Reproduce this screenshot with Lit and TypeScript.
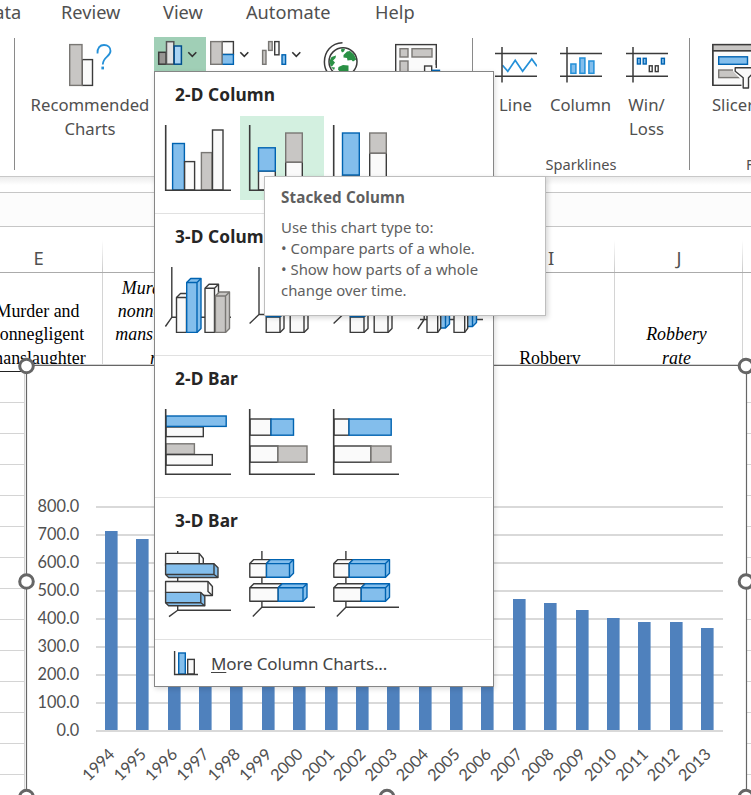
import { LitElement, html, svg, css } from "lit";
import { customElement, property } from "lit/decorators.js";

const INK = "#3b3b3b", BLUE = "#0063b1", SKY = "#83beec", GREY = "#797774", SILVER = "#c8c6c4", PAPER = "#fafafa";

type Tone = "w" | "b" | "g";
const FILL: Record<Tone, string> = { w: PAPER, b: SKY, g: SILVER };
const EDGE: Record<Tone, string> = { w: INK, b: BLUE, g: GREY };

const box = (t: Tone, x1: number, y1: number, x2: number, y2: number) =>
  svg`<rect x=${x1} y=${y1} width=${x2 - x1} height=${y2 - y1} fill=${FILL[t]} stroke=${EDGE[t]} stroke-width="1.4"/>`;
const line = (d: string, c = INK, w = 1.4) => svg`<path d=${d} fill="none" stroke=${c} stroke-width=${w}/>`;
const shape = (t: Tone, d: string, edge = EDGE[t]) => svg`<path d=${d} fill=${FILL[t]} stroke=${edge} stroke-width="1.4" stroke-linejoin="round"/>`;
/* Cuboid seen from the upper right: front face plus top and side faces. */
const cube = (t: Tone, x1: number, y1: number, x2: number, y2: number, dx = 4, dy = 4) => svg`
  ${shape(t, `M${x1} ${y1}L${x1 + dx} ${y1 - dy}H${x2 + dx}V${y2 - dy}L${x2} ${y2}H${x1}Z`)}
  ${line(`M${x1} ${y1}H${x2}V${y2}M${x2} ${y1}L${x2 + dx} ${y1 - dy}`, EDGE[t])}`;
/* Cuboid seen from the lower right. */
const under = (t: Tone, x1: number, y1: number, x2: number, y2: number) => svg`
  ${shape(t, `M${x1} ${y1}H${x2}L${x2 + 4} ${y1 + 4}V${y2 + 3}H${x1 + 3}L${x1} ${y2}Z`, INK)}
  ${line(`M${x1} ${y2}H${x2}V${y1}M${x2} ${y2}L${x2 + 4} ${y2 + 3}`)}`;

const axes = line("M9.7 9V74.2H75", INK, 1.6);

const TILES: Record<string, unknown[]> = {
  "2-D Column": [
    svg`${box("b", 16.6, 27.5, 28.4, 74)}${box("w", 28.6, 45.6, 38.6, 74)}${box("g", 45.4, 36.6, 56, 74)}${box("w", 56.5, 14, 67, 74)}${axes}`,
    svg`${box("w", 18.5, 55, 35.3, 74)}${box("b", 18.5, 31.8, 35.3, 55)}${box("w", 45.7, 46, 62.3, 74)}${box("g", 45.7, 17, 62.3, 46)}${axes}`,
    svg`${box("w", 18.5, 60, 35.3, 74)}${box("b", 18.5, 17, 35.3, 59)}${box("w", 45.7, 37, 62.3, 74)}${box("g", 45.7, 17, 62.3, 37)}${axes}`,
  ],
  "3-D Column": [
    svg`${line("M15.8 9V59.3L9.4 68.5M15.8 59.3H75")}${cube("w", 20.5, 39.5, 30.5, 74.4)}${cube("b", 30.7, 24.5, 41, 74.4)}${cube("w", 49, 30.3, 58.5, 74.4)}${cube("g", 59.4, 38, 69.5, 74.4)}`,
    svg`${line("M19 9V56.5L9.6 65.5M19 56.5H60")}${cube("w", 26.2, 59, 40, 74.4)}${cube("b", 26.2, 34, 40, 58.6)}${cube("w", 50.2, 46, 64, 74.4)}`,
    svg`${line("M19 9V56.5L9.6 65.5M19 56.5H60")}${cube("w", 26.2, 59, 40, 74.4)}${cube("b", 26.2, 20, 40, 58.6)}${cube("w", 50.2, 40, 64, 74.4)}`,
    svg`${line("M16.2 9V61.5L9.8 71M12 61.5H75")}${cube("b", 31, 34, 37.5, 70)}${cube("b", 58, 30, 64.5, 68.5)}${cube("w", 19, 42, 29.7, 74.4, 3)}${cube("w", 46, 44, 56.7, 74.4, 3)}`,
  ],
  "2-D Bar": [
    svg`${box("w", 10, 27, 47.3, 36.6)}${box("b", 10, 16, 70.2, 26.4)}${box("g", 10, 43.8, 38.4, 54.2)}${box("w", 10, 54.6, 56.3, 65.2)}${axes}`,
    svg`${box("w", 10, 19, 31, 35.2)}${box("b", 31, 19, 53.5, 35.2)}${box("w", 10, 46, 38, 62.2)}${box("g", 38, 46, 67, 62.2)}${axes}`,
    svg`${box("w", 10, 19, 25, 35.2)}${box("b", 25, 19, 67.2, 35.2)}${box("w", 10, 46, 47, 62.2)}${box("g", 47, 46, 67, 62.2)}${axes}`,
  ],
  "3-D Bar": [
    svg`${line("M21.7 9V68.2L13 74.6M21.7 68.2H75")}${shape("w", "M9.6 11.4H43.2L47.3 16.5V24H9.6Z")}${line("M43.2 11.4V24")}${under("b", 9.6, 21.7, 58, 32.5)}
      ${shape("w", "M9.6 39.5H52L56.4 44.5V53.5H50L9.6 51Z")}${line("M52 39.5V49.5L56.4 53.5")}${under("b", 9.6, 50.4, 44.8, 60.8)}`,
    svg`${line("M21.9 9V65.3L12.8 74.4M21.9 65.3H75")}${cube("w", 9.8, 21.6, 26.5, 35.2)}${cube("b", 26.5, 21.6, 49.5, 35.2)}${cube("w", 9.8, 45.7, 38.2, 59.2)}${cube("b", 38.2, 45.7, 63, 59.2)}`,
    svg`${line("M21.9 9V65.3L12.8 74.4M21.9 65.3H75")}${cube("w", 9.8, 21.6, 25.2, 35.2)}${cube("b", 25.2, 21.6, 61.5, 35.2)}${cube("w", 9.8, 45.7, 37.2, 59.2)}${cube("b", 37.2, 45.7, 61.5, 59.2)}`,
  ],
};

@customElement("chart-menu")
export class ChartMenu extends LitElement {
  static styles = css`
    :host { display: flex; flex-direction: column; box-sizing: border-box; background: #fff; border: 1px solid #868686; box-shadow: 1px 2px 5px rgba(0,0,0,.14); font-family: "Noto Sans", sans-serif; }
    section { height: 141px; border-bottom: 1px solid #e1e1e1; margin: 0 1px 0 0; }
    h3 { margin: 0; height: 44px; padding-left: 20px; font-size: 17.3px; font-weight: 700; line-height: 46px; letter-spacing: .12px; color: #262626; box-sizing: border-box; white-space: nowrap; }
    .tiles { display: flex; padding-left: 1px; }
    .tile { width: 84px; height: 84px; }
    .tile.on { background: #d3f0e0; }
    svg { display: block; }
    .more { display: flex; align-items: center; height: 46px; padding-left: 17px; color: #444; }
    .more span { margin-left: 11px; font-size: 17px; white-space: nowrap; letter-spacing: -.13px; }
    u { text-underline-offset: 2px; text-decoration-thickness: 1px; }
  `;
  render() {
    return html`
      ${Object.entries(TILES).map(([name, tiles]) => html`<section>
        <h3>${name}</h3>
        <div class="tiles">${tiles.map((t, i) => html`<div class="tile ${name === "2-D Column" && i === 1 ? "on" : ""}">
          <svg width="84" height="84" viewBox="0 0 84 84">${t}</svg></div>`)}</div>
      </section>`)}
      <div class="more">
        <svg width="28" height="28" viewBox="172 648 28 28">${box("b", 178.7, 652, 185.3, 673)}${box("w", 187.7, 658.4, 194.3, 673)}${line("M174.6 650V673.5H198")}</svg>
        <span><u>M</u>ore Column Charts...</span>
      </div>`;
  }
}

@customElement("chart-tip")
export class ChartTip extends LitElement {
  static styles = css`
    :host { display: block; box-sizing: border-box; background: #fff; border: 1px solid #bebebe; box-shadow: 2px 2px 5px rgba(0,0,0,.16); padding: 10px 16px; font: 14.9px/21px "Noto Sans", sans-serif; color: #5f5f5f; white-space: nowrap; }
    b { display: block; margin-bottom: 9px; font-size: 15.2px; letter-spacing: .12px; }
    p { margin: 0; }
  `;
  render() {
    return html`<b>Stacked Column</b><p>Use this chart type to:</p><p>• Compare parts of a whole.</p><p>• Show how parts of a whole</p><p>change over time.</p>`;
  }
}

const VALUES = [713.6, 684.5, 636.6, 611, 567.6, 523, 506.5, 504.5, 494.4, 475.8, 463.2, 469, 479.3, 469.5, 456, 430, 403, 387.1, 387.8, 367];

@customElement("crime-chart")
export class CrimeChart extends LitElement {
  static styles = css`
    :host { display: block; }
    svg { display: block; overflow: visible; }
    text { font-family: Lato, sans-serif; font-size: 16.3px; fill: #505050; text-anchor: end; }
  `;
  render() {
    return html`<svg width="725" height="430" viewBox="26 365 725 430">
      <rect x="24" y="364" width="723" height="440" fill="#fff"/>
      <path d="M24.5 795V364.5H747" fill="none" stroke="#d4d4d4"/>
      <path d="M26.5 800V365.5H746.5V800" fill="none" stroke="#666" stroke-width="1.2"/>
      ${[...Array(9).keys()].map((k) => svg`
        <rect x="96" y=${506 + 28 * k} width="627" height="2" fill="#d9d9d9"/>
        <text x="79.2" y=${512.4 + 28 * k}>${800 - 100 * k}.0</text>`)}
      ${VALUES.map((v, i) => {
        const x = Math.round(105 + 31.37 * i), top = Math.round(730.5 - v * 0.28);
        return svg`<rect x=${x} y=${top} width="12.6" height=${730 - top} fill="#4f81bd"/>
          <text transform="translate(${115.8 + 31.37 * i} 755.3) rotate(-45)">${1994 + i}</text>`;
      })}
      ${[[26.5, 366], [746, 366], [26.5, 581.5], [746, 581.5], [26.5, 797], [387, 797], [746, 797]].map(([x, y]) =>
        svg`<circle cx=${x} cy=${y} r="6.8" fill="#fff" stroke="#666" stroke-width="3"/>`)}
    </svg>`;
  }
}

@customElement("tool-button")
export class ToolButton extends LitElement {
  @property() label = "";
  static styles = css`
    :host { display: flex; flex-direction: column; align-items: center; flex: none; padding-top: 5px; box-sizing: border-box; font: 16.7px/24px "Noto Sans", sans-serif; color: #505050; text-align: center; }
    .art { height: 51px; }
    .label { white-space: pre; }
  `;
  render() {
    return html`<div class="art"><slot></slot></div><div class="label">${this.label}</div>`;
  }
}

const chevron = (x: number) => line(`M${x} 52.3L${x + 4} 56.3L${x + 8} 52.3`, "#333", 1.6);
const frame = (x: number) => line(`M${x} 53.6H${x + 42}M${x} 76.2H${x + 42}M${x + 7} 47V82.5`, INK, 1.5);

@customElement("app-root")
export class AppRoot extends LitElement {
  static styles = css`
    :host { display: flex; flex-direction: column; position: relative; width: 751px; height: 795px; overflow: hidden; background: #fff; font-family: "Noto Sans", sans-serif; color: #505050; }
    svg { display: block; flex: none; }
    .tabs { display: flex; height: 37px; line-height: 25px; font-size: 18.2px; white-space: nowrap; flex: none; }
    .tabs span { flex: none; }
    .t0 { width: 61px; text-indent: -19px; }
    .t1 { width: 102px; } .t2 { width: 83px; } .t3 { width: 129px; }
    .ribbon { display: flex; height: 139px; border-bottom: 1px solid #c8c8c8; flex: none; }
    .rule { width: 1px; height: 132px; margin-top: 1px; background: #8a8a8a; flex: none; }
    .lead { width: 14px; flex: none; }
    .charts { width: 457px; display: flex; flex: none; }
    .rec { width: 139px; padding-left: 11px; }
    .pick { width: 52px; height: 34px; background: #a0cfb6; }
    .sparks { width: 216px; display: flex; flex-direction: column; flex: none; }
    .row { display: flex; height: 116px; }
    .line { width: 63px; margin-left: 11px; }
    .col { width: 67px; } .win { width: 65px; }
    .caption { font-size: 14.6px; line-height: 22px; text-align: center; white-space: nowrap; }
    .filters { width: 61px; overflow: hidden; flex: none; }
    .slice { width: 86px; height: 116px; }
    .filters .caption { text-align: left; padding-left: 56px; }
    .shade { height: 15px; background: linear-gradient(#ececec, #fff 8px); border-bottom: 1px solid #c6c6c6; flex: none; }
    .formula { height: 33px; background: #fcfcfc; border-bottom: 1px solid #c6c6c6; flex: none; }
    .grid { display: grid; grid-template-columns: 129px 128px 128px 128px 128px 128px 40px; width: 809px; margin-left: -26px; flex: none; }
    .cols { height: 45px; border-bottom: 1px solid #ababab; }
    .cols div { font-size: 18.4px; line-height: 62px; height: 45px; text-align: center; padding-left: 1px; border-right: 1px solid transparent; border-image: linear-gradient(#fff 30%, #c8c8c8) 1; border-width: 0 1px 0 0; box-sizing: border-box; }
    .heads { height: 98px; border-bottom: 1px solid #222; }
    .heads div { display: flex; align-items: flex-end; justify-content: center; box-sizing: border-box; padding-bottom: 1px; padding-right: 1px; border-right: 1px solid #d4d4d4; font: 17.9px/23.3px "Liberation Serif", serif; color: #000; text-align: center; white-space: pre; }
    .heads .it { font-style: italic; padding-right: 4px; }
    .rows { height: 423px; background: repeating-linear-gradient(#fff 0 30px, #d4d4d4 30px 31px); flex: none; }
    crime-chart { position: absolute; left: 26px; top: 365px; }
    chart-menu { position: absolute; left: 154px; top: 71px; width: 340px; height: 616px; }
    chart-tip { position: absolute; left: 264px; top: 176px; width: 282px; height: 140px; }
  `;
  render() {
    const heads: [string, string][] = [["Murder and\nnonnegligent\nmanslaughter", ""], ["Murder and\nnonnegligent\nmanslaughter\nrate", "it"], ["", ""], ["", ""], ["Robbery", ""], ["Robbery\nrate", "it"], ["", ""]];
    return html`
      <div class="tabs"><span class="t0">Data</span><span class="t1">Review</span><span class="t2">View</span><span class="t3">Automate</span><span>Help</span></div>
      <div class="ribbon">
        <div class="lead"></div><div class="rule"></div>
        <div class="charts">
          <tool-button class="rec" .label=${"Recommended\nCharts"}>
            <svg width="48" height="46" viewBox="66 42 48 46">${box("w", 82.3, 59.6, 92.5, 85.4)}${box("g", 69.7, 44.6, 82, 85.4)}
              ${line("M97.5 53.5C97.2 47.8 100 45 104 45S110.5 47.6 110.5 51C110.5 56.5 102.8 57 102.8 64.5", "#2490d8", 1.8)}<rect x="101.4" y="66.6" width="2.6" height="2.8" fill="#2490d8"/></svg>
          </tool-button>
          <div class="pick"><svg width="52" height="34" viewBox="154 37 52 34">
            <g stroke-width="1.5"><rect x="158.7" y="52.3" width="7.4" height="11.9" fill="#979593" stroke="#3b3b3b"/><rect x="166.5" y="41.7" width="7.3" height="22.5" fill="#e1e1e1" stroke="#555"/><rect x="174.2" y="46" width="7.2" height="18.2" fill="#a9d3f2" stroke="#004e8c"/></g>${chevron(188.3)}</svg></div>
          <svg width="266" height="39" viewBox="206 37 266 39">
            ${box("w", 222, 41.6, 233.4, 54.5)}${box("b", 222, 54.5, 233.4, 64.3)}${box("g", 210.7, 41.6, 222, 64.3)}${chevron(240.3)}
            ${box("g", 262.6, 50.4, 266, 64.3)}${box("g", 268.6, 41.6, 272.2, 50.4)}${box("w", 274.7, 41.6, 279, 54.8)}${box("b", 282, 54.8, 285.6, 64.3)}${chevron(292.3)}
            <circle cx="343" cy="61.8" r="14" fill="#fff" stroke=${INK} stroke-width="1.5"/>
            <path d="M343.5 55L347 51.5L350 51L354 54.5L356.3 59.5L353 61.5L351.5 60L347.5 60.5L347 58L343.5 57.5ZM341.5 48.5L345 49L344 51.5L342 52.5L341 50.5ZM329.5 61L331.5 57L336 55.5L335.5 58L333 60.5L335 62.5L332 66.5L330.5 66ZM338.5 67L343 65L348.5 65.5L348.5 72H340L338 69.5ZM331 67L335 67.5L334 70Z" fill="#2a9145"/>
            ${line("M342.5 42.8C331 43.2 324.4 52 324.4 62C324.4 66.5 325.5 70 328 73", INK, 1.5)}
            ${box("w", 395.7, 44.6, 436.3, 84)}${box("g", 400, 48.7, 408, 57)}${box("g", 412, 48.7, 432, 57)}${box("g", 400, 61, 408, 76)}
            <rect x="424" y="65" width="20" height="12" fill="#fff"/>${line("M436.3 60V68")}${box("w", 424.6, 66, 431.7, 78)}${box("b", 432.4, 70.3, 439.5, 78)}
          </svg>
        </div>
        <div class="rule"></div>
        <div class="sparks">
          <div class="row">
            <tool-button class="line" label="Line"><svg width="42" height="46" viewBox="495 42 42 46">${line("M502.5 65.3L507.8 71.3L515.2 60.3L522.6 71.3L531.8 59L537 66.3", "#2490d8", 1.7)}${frame(495)}</svg></tool-button>
            <tool-button class="col" label="Column"><svg width="42" height="46" viewBox="560 42 42 46">${frame(560)}<g fill=${SKY} stroke="#2490d8" stroke-width="1.5"><rect x="570.9" y="64" width="5" height="9.3"/><rect x="579.9" y="58" width="5" height="15.3"/><rect x="588.9" y="61" width="5" height="12.3"/></g></svg></tool-button>
            <tool-button class="win" .label=${"Win/\nLoss"}><svg width="42" height="46" viewBox="626 42 42 46">${frame(626)}${box("b", 637.4, 58.3, 640.4, 64)}${box("b", 643.2, 58.3, 646.2, 64)}${box("b", 661.4, 58.3, 664.4, 64)}${box("w", 649.3, 65.8, 652.2, 71.6)}${box("w", 655.3, 65.8, 658.2, 71.6)}</svg></tool-button>
          </div>
          <div class="caption">Sparklines</div>
        </div>
        <div class="rule"></div>
        <div class="filters">
          <tool-button class="slice" label="Slicer"><svg width="42" height="50" viewBox="712 42 42 50">${box("w", 712.8, 44.6, 760, 85.3)}${box("g", 712.8, 44.6, 760, 50.7)}${line("M712.8 85.3V44.6H760M712 50.7H760")}${box("b", 718.7, 56.8, 747.5, 64.3)}${box("g", 718.7, 70, 744, 77.6)}<path d="M733 66.5H756V88.5H741.5V80L733 71Z" fill="#fff"/>${shape("w", "M735.2 67.8H756L755 71.3L748.5 77.8V88H743.2V77.8L735.2 71.3Z")}</svg></tool-button>
          <div class="caption">Filters</div>
        </div>
      </div>
      <div class="shade"></div>
      <div class="formula"></div>
      <div class="grid cols">${["E", "F", "G", "H", "I", "J", ""].map((c) => html`<div>${c}</div>`)}</div>
      <div class="grid heads">${heads.map(([t, c]) => html`<div class=${c}>${t}</div>`)}</div>
      <div class="rows"></div>
      <crime-chart></crime-chart>
      <chart-menu></chart-menu>
      <chart-tip></chart-tip>`;
  }
}
